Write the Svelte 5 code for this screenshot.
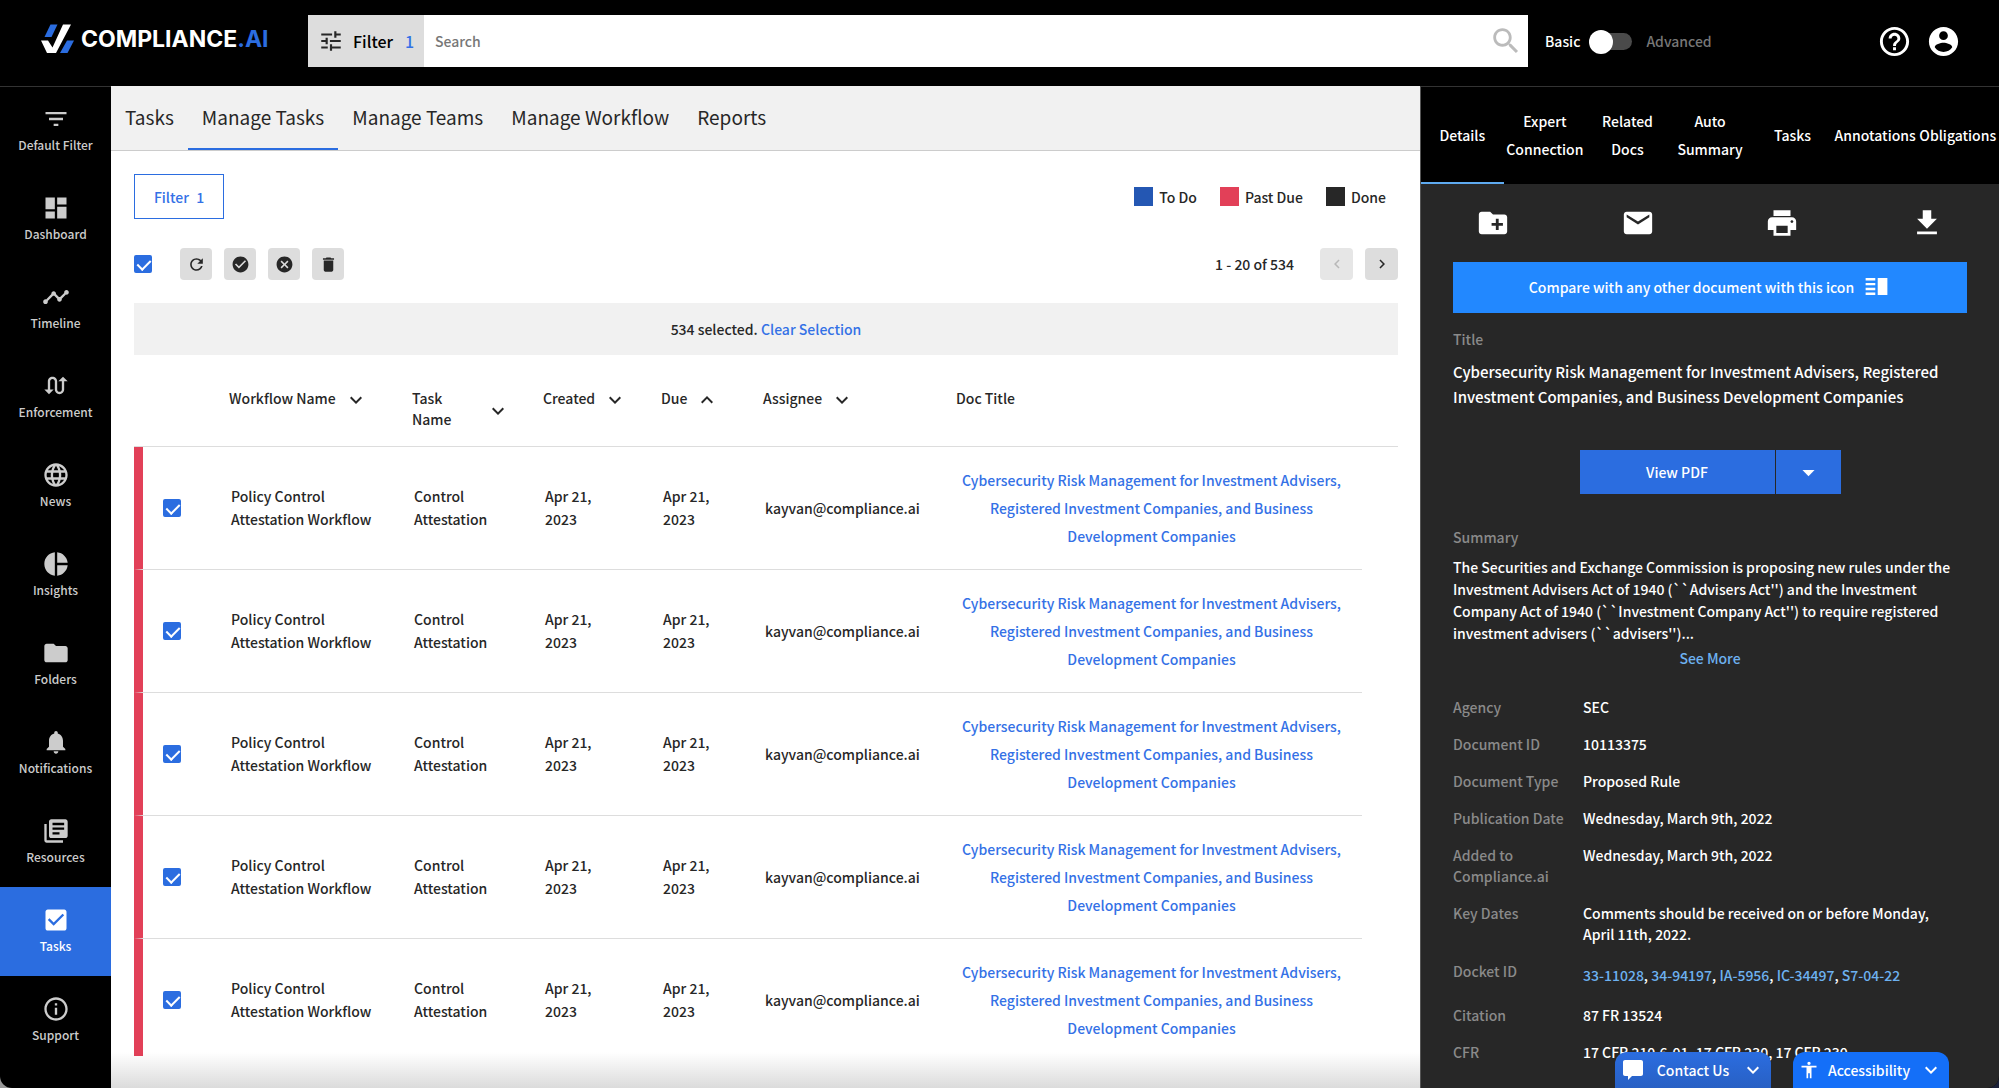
<script lang="ts">
	// Material-style 24x24 glyph paths, drawn by the icon snippet below.
	const icons = {
		filterList: 'M10 18h4v-2h-4v2zM3 6v2h18V6H3zm3 7h12v-2H6v2z',
		dashboard: 'M3 13h8V3H3v10zm0 8h8v-6H3v6zm10 0h8V11h-8v10zm0-18v6h8V3h-8z',
		timeline:
			'M23 8c0 1.1-.9 2-2 2-.18 0-.35-.02-.51-.07l-3.56 3.55c.05.16.07.34.07.52 0 1.1-.9 2-2 2s-2-.9-2-2c0-.18.02-.36.07-.52l-2.55-2.55c-.16.05-.34.07-.52.07s-.36-.02-.52-.07l-4.55 4.56c.05.16.07.33.07.51 0 1.1-.9 2-2 2s-2-.9-2-2 .9-2 2-2c.18 0 .35.02.51.07l4.56-4.55C8.02 9.36 8 9.18 8 9c0-1.1.9-2 2-2s2 .9 2 2c0 .18-.02.36-.07.52l2.55 2.55c.16-.05.34-.07.52-.07s.36.02.52.07l3.55-3.56C19.02 8.35 19 8.18 19 8c0-1.1.9-2 2-2s2 .9 2 2z',
		swap: 'M18 4l-4 4h3v7c0 1.1-.9 2-2 2s-2-.9-2-2V8c0-2.21-1.79-4-4-4S5 5.79 5 8v7H2l4 4 4-4H7V8c0-1.1.9-2 2-2s2 .9 2 2v7c0 2.21 1.79 4 4 4s4-1.79 4-4V8h3l-4-4z',
		globe:
			'M11.99 2C6.47 2 2 6.48 2 12s4.47 10 9.99 10C17.52 22 22 17.52 22 12S17.52 2 11.99 2zm6.93 6h-2.95c-.32-1.25-.78-2.45-1.38-3.56 1.84.63 3.37 1.91 4.33 3.56zM12 4.04c.83 1.2 1.48 2.53 1.91 3.96h-3.82c.43-1.43 1.08-2.76 1.91-3.96zM4.26 14C4.1 13.36 4 12.69 4 12s.1-1.36.26-2h3.38c-.08.66-.14 1.32-.14 2 0 .68.06 1.34.14 2H4.26zm.82 2h2.95c.32 1.25.78 2.45 1.38 3.56-1.84-.63-3.37-1.9-4.33-3.56zm2.95-8H5.08c.96-1.66 2.49-2.93 4.33-3.56C8.81 5.55 8.35 6.75 8.03 8zM12 19.96c-.83-1.2-1.48-2.53-1.91-3.96h3.82c-.43 1.43-1.08 2.76-1.91 3.96zM14.34 14H9.66c-.09-.66-.16-1.32-.16-2 0-.68.07-1.35.16-2h4.68c.09.65.16 1.32.16 2 0 .68-.07 1.34-.16 2zm.25 5.56c.6-1.11 1.06-2.31 1.38-3.56h2.95c-.96 1.65-2.49 2.93-4.33 3.56zM16.36 14c.08-.66.14-1.32.14-2 0-.68-.06-1.34-.14-2h3.38c.16.64.26 1.31.26 2s-.1 1.36-.26 2h-3.38z',
		pie: 'M11 2v20c-5.07-.5-9-4.79-9-10s3.93-9.5 9-10zm2.03 0v8.99H22c-.47-4.74-4.24-8.52-8.97-8.99zm0 11.01V22c4.74-.47 8.5-4.25 8.97-8.99h-8.97z',
		folder: 'M10 4H4c-1.1 0-1.99.9-1.99 2L2 18c0 1.1.9 2 2 2h16c1.1 0 2-.9 2-2V8c0-1.1-.9-2-2-2h-8l-2-2z',
		bell: 'M12 22c1.1 0 2-.9 2-2h-4c0 1.1.89 2 2 2zm6-6v-5c0-3.07-1.64-5.64-4.5-6.32V4c0-.83-.67-1.5-1.5-1.5s-1.5.67-1.5 1.5v.68C7.63 5.36 6 7.92 6 11v5l-2 2v1h16v-1l-2-2z',
		books: 'M4 6H2v14c0 1.1.9 2 2 2h14v-2H4V6zm16-4H8c-1.1 0-2 .9-2 2v12c0 1.1.9 2 2 2h12c1.1 0 2-.9 2-2V4c0-1.1-.9-2-2-2zm-1 9H9V9h10v2zm-4 4H9v-2h6v2zm4-8H9V5h10v2z',
		checkBox:
			'M19 3H5c-1.11 0-2 .9-2 2v14c0 1.1.89 2 2 2h14c1.11 0 2-.9 2-2V5c0-1.1-.89-2-2-2zm-9 14l-5-5 1.41-1.41L10 14.17l7.59-7.59L19 8l-9 9z',
		info: 'M11 17h2v-6h-2v6zm1-15C6.48 2 2 6.48 2 12s4.48 10 10 10 10-4.48 10-10S17.52 2 12 2zm0 18c-4.41 0-8-3.59-8-8s3.59-8 8-8 8 3.59 8 8-3.59 8-8 8zM11 9h2V7h-2v2z',
		tune: 'M3 17v2h6v-2H3zM3 5v2h10V5H3zm10 16v-2h8v-2h-8v-2h-2v6h2zM7 9v2H3v2h4v2h2V9H7zm14 4v-2H11v2h10zm-6-4h2V7h4V5h-4V3h-2v6z',
		search:
			'M15.5 14h-.79l-.28-.27C15.41 12.59 16 11.11 16 9.5 16 5.91 13.09 3 9.5 3S3 5.91 3 9.5 5.91 16 9.5 16c1.61 0 3.09-.59 4.23-1.57l.27.28v.79l5 4.99L20.49 19l-4.99-5zm-6 0C7.01 14 5 11.99 5 9.5S7.01 5 9.5 5 14 7.01 14 9.5 11.99 14 9.5 14z',
		help: 'M11 18h2v-2h-2v2zm1-16C6.48 2 2 6.48 2 12s4.48 10 10 10 10-4.48 10-10S17.52 2 12 2zm0 18c-4.41 0-8-3.59-8-8s3.59-8 8-8 8 3.59 8 8-3.59 8-8 8zm0-14c-2.21 0-4 1.79-4 4h2c0-1.1.9-2 2-2s2 .9 2 2c0 2-3 1.75-3 5h2c0-2.25 3-2.5 3-5 0-2.21-1.79-4-4-4z',
		account:
			'M12 2C6.48 2 2 6.48 2 12s4.48 10 10 10 10-4.48 10-10S17.52 2 12 2zm0 3c1.66 0 3 1.34 3 3s-1.34 3-3 3-3-1.34-3-3 1.34-3 3-3zm0 14.2c-2.5 0-4.71-1.28-6-3.22.03-1.99 4-3.08 6-3.08 1.99 0 5.97 1.09 6 3.08-1.29 1.94-3.5 3.22-6 3.22z',
		refresh:
			'M17.65 6.35C16.2 4.9 14.21 4 12 4c-4.42 0-7.99 3.58-7.99 8s3.57 8 7.99 8c3.73 0 6.84-2.55 7.73-6h-2.08c-.82 2.33-3.04 4-5.65 4-3.31 0-6-2.69-6-6s2.69-6 6-6c1.66 0 3.14.69 4.22 1.78L13 11h7V4l-2.35 2.35z',
		checkCircle:
			'M12 2C6.48 2 2 6.48 2 12s4.48 10 10 10 10-4.48 10-10S17.52 2 12 2zm-2 15l-5-5 1.41-1.41L10 14.17l7.59-7.59L19 8l-9 9z',
		cancel:
			'M12 2C6.47 2 2 6.47 2 12s4.47 10 10 10 10-4.47 10-10S17.53 2 12 2zm5 13.59L15.59 17 12 13.41 8.41 17 7 15.59 10.59 12 7 8.41 8.41 7 12 10.59 15.59 7 17 8.41 13.41 12 17 15.59z',
		trash: 'M6 19c0 1.1.9 2 2 2h8c1.1 0 2-.9 2-2V7H6v12zM19 4h-3.5l-1-1h-5l-1 1H5v2h14V4z',
		left: 'M15.41 7.41L14 6l-6 6 6 6 1.41-1.41L10.83 12z',
		right: 'M10 6L8.59 7.41 13.17 12l-4.58 4.59L10 18l6-6z',
		down: 'M16.59 8.59L12 13.17 7.41 8.59 6 10l6 6 6-6z',
		up: 'M12 8l-6 6 1.41 1.41L12 10.83l4.59 4.58L18 14z',
		caret: 'M7 10l5 5 5-5z',
		newFolder:
			'M20 6h-8l-2-2H4c-1.11 0-1.99.89-1.99 2L2 18c0 1.11.89 2 2 2h16c1.11 0 2-.89 2-2V8c0-1.11-.89-2-2-2zm-1 8h-3v3h-2v-3h-3v-2h3V9h2v3h3v2z',
		mail: 'M20 4H4c-1.1 0-1.99.9-1.99 2L2 18c0 1.1.9 2 2 2h16c1.1 0 2-.9 2-2V6c0-1.1-.9-2-2-2zm0 4l-8 5-8-5V6l8 5 8-5v2z',
		print: 'M19 8H5c-1.66 0-3 1.34-3 3v6h4v4h12v-4h4v-6c0-1.66-1.34-3-3-3zm-3 11H8v-5h8v5zm3-7c-.55 0-1-.45-1-1s.45-1 1-1 1 .45 1 1-.45 1-1 1zm-1-9H6v4h12V3z',
		download: 'M19 9h-4V3H9v6H5l7 7 7-7zM5 18v2h14v-2H5z',
		split: 'M3 15h8v-2H3v2zm0 4h8v-2H3v2zm0-8h8V9H3v2zm0-6v2h8V5H3zm10 0h8v14h-8V5z',
		chat: 'M4 2h16c1.1 0 2 .9 2 2v12c0 1.1-.9 2-2 2h-9l-4 4v-4H4c-1.1 0-2-.9-2-2V4c0-1.1.9-2 2-2z',
		person: 'M12 2a2 2 0 1 1 0 4 2 2 0 0 1 0-4zm9 7h-6v13h-2v-6h-2v6H9V9H3V7h18v2z'
	};
	type IconName = keyof typeof icons;

	const nav: { label: string; icon: IconName }[] = [
		{ label: 'Default Filter', icon: 'filterList' },
		{ label: 'Dashboard', icon: 'dashboard' },
		{ label: 'Timeline', icon: 'timeline' },
		{ label: 'Enforcement', icon: 'swap' },
		{ label: 'News', icon: 'globe' },
		{ label: 'Insights', icon: 'pie' },
		{ label: 'Folders', icon: 'folder' },
		{ label: 'Notifications', icon: 'bell' },
		{ label: 'Resources', icon: 'books' },
		{ label: 'Tasks', icon: 'checkBox' },
		{ label: 'Support', icon: 'info' }
	];
	let activeNav = $state('Tasks');

	const tabs = ['Tasks', 'Manage Tasks', 'Manage Teams', 'Manage Workflow', 'Reports'];
	let activeTab = $state('Manage Tasks');

	const legend = [
		{ label: 'To Do', tone: 'todo' },
		{ label: 'Past Due', tone: 'past' },
		{ label: 'Done', tone: 'done' }
	];

	const bulkActions: { label: string; icon: IconName }[] = [
		{ label: 'Refresh', icon: 'refresh' },
		{ label: 'Complete', icon: 'checkCircle' },
		{ label: 'Dismiss', icon: 'cancel' },
		{ label: 'Delete', icon: 'trash' }
	];

	const columns: { label: string; sort: IconName | null }[] = [
		{ label: 'Workflow Name', sort: 'down' },
		{ label: 'Task Name', sort: 'down' },
		{ label: 'Created', sort: 'down' },
		{ label: 'Due', sort: 'up' },
		{ label: 'Assignee', sort: 'down' },
		{ label: 'Doc Title', sort: null }
	];

	const title =
		'Cybersecurity Risk Management for Investment Advisers, Registered Investment Companies, and Business Development Companies';

	let rows = $state(
		Array.from({ length: 5 }, (_, id) => ({
			id,
			checked: true,
			workflow: 'Policy Control Attestation Workflow',
			task: 'Control Attestation',
			created: 'Apr 21, 2023',
			due: 'Apr 21, 2023',
			assignee: 'kayvan@compliance.ai'
		}))
	);
	let allChecked = $state(true);
	let advanced = $state(false);
	let query = $state('');

	const docTabs = ['Details', 'Expert Connection', 'Related Docs', 'Auto Summary', 'Tasks', 'Annotations', 'Obligations'];
	let activeDocTab = $state('Details');

	const docActions: { label: string; icon: IconName }[] = [
		{ label: 'Add to folder', icon: 'newFolder' },
		{ label: 'Email', icon: 'mail' },
		{ label: 'Print', icon: 'print' },
		{ label: 'Download', icon: 'download' }
	];

	const dockets = ['33-11028', '34-94197', 'IA-5956', 'IC-34497', 'S7-04-22'];
	const facts = [
		['Agency', 'SEC'],
		['Document ID', '10113375'],
		['Document Type', 'Proposed Rule'],
		['Publication Date', 'Wednesday, March 9th, 2022'],
		['Added to Compliance.ai', 'Wednesday, March 9th, 2022'],
		['Key Dates', 'Comments should be received on or before Monday, April 11th, 2022.'],
		['Docket ID', ''],
		['Citation', '87 FR 13524'],
		['CFR', '17 CFR 210.6-01, 17 CFR 230, 17 CFR 230']
	];

	function toggleAll() {
		for (const row of rows) row.checked = allChecked;
	}
</script>

{#snippet icon(name: IconName, size: number)}
	<svg width={size} height={size} viewBox="0 0 24 24" fill="currentColor" aria-hidden="true">
		<path d={icons[name]} />
	</svg>
{/snippet}

<div class="app">
	<header class="topbar">
		<a class="logo" href="#home">
			<svg width="33" height="30" viewBox="0 0 33 30" aria-hidden="true">
				<path fill="#2b6de0" d="M9.5 .5h7L10.5 13H3.5z" />
				<path fill="#2b6de0" d="M26 16.5h7L26.500 29h-7.500z" />
				<path fill="#fff" d="M22 .5h8L15 29H6L0 16.500h7l4.500 7z" />
			</svg>
			<span>COMPLIANCE<b>.AI</b></span>
		</a>
		<div class="searchbar">
			<button class="search-filter">
				{@render icon('tune', 26)}
				<span>Filter</span>
				<span class="count">1</span>
			</button>
			<input type="search" placeholder="Search" aria-label="Search" bind:value={query} />
			<button class="search-go" aria-label="Run search">{@render icon('search', 34)}</button>
		</div>
		<label class="mode">
			<span>Basic</span>
			<input type="checkbox" role="switch" bind:checked={advanced} />
			<span class="muted">Advanced</span>
		</label>
		<div class="account">
			<button aria-label="Help">{@render icon('help', 35)}</button>
			<button aria-label="Account">{@render icon('account', 35)}</button>
		</div>
	</header>

	<div class="body">
		<nav class="sidebar">
			{#each nav as item (item.label)}
				<a
					href="#{item.label}"
					class:active={item.label === activeNav}
					onclick={() => (activeNav = item.label)}
				>
					{@render icon(item.icon, 28)}
					<span>{item.label}</span>
				</a>
			{/each}
		</nav>

		<main class="main">
			<div class="tabs" role="tablist">
				{#each tabs as tab (tab)}
					<button role="tab" aria-selected={tab === activeTab} onclick={() => (activeTab = tab)}>{tab}</button>
				{/each}
			</div>

			<div class="content">
				<div class="line">
					<button class="filter">Filter <span>1</span></button>
					<ul class="legend">
						{#each legend as item (item.tone)}
							<li class={item.tone}>{item.label}</li>
						{/each}
					</ul>
				</div>

				<div class="line toolbar">
					<input
						type="checkbox"
						class="check"
						aria-label="Select all tasks"
						bind:checked={allChecked}
						onchange={toggleAll}
					/>
					<div class="bulk">
						{#each bulkActions as action (action.icon)}
							<button class="tool" aria-label={action.label}>{@render icon(action.icon, 19)}</button>
						{/each}
					</div>
					<div class="pager">
						<span>1 - 20 of 534</span>
						<button class="tool" aria-label="Previous page" disabled>{@render icon('left', 18)}</button>
						<button class="tool" aria-label="Next page">{@render icon('right', 18)}</button>
					</div>
				</div>

				<div class="selection">534 selected. <a href="#clear">Clear Selection</a></div>

				<div class="table-wrap">
					<table>
						<colgroup>
							<col class="c-check" />
							<col class="c-workflow" />
							<col class="c-task" />
							<col class="c-created" />
							<col class="c-due" />
							<col class="c-assignee" />
							<col />
							<col class="c-end" />
						</colgroup>
						<thead>
							<tr>
								<th></th>
								{#each columns as col (col.label)}
									<th>
										<div class="head" class:narrow={col.label === 'Task Name'}>
											<span>{col.label}</span>
											{#if col.sort}
												<button aria-label="Sort by {col.label}">{@render icon(col.sort, 24)}</button>
											{/if}
										</div>
									</th>
								{/each}
								<th></th>
							</tr>
						</thead>
						<tbody>
							{#each rows as row (row.id)}
								<tr>
									<td class="status">
										<input
											type="checkbox"
											class="check"
											aria-label="Select task {row.id + 1}"
											bind:checked={row.checked}
										/>
									</td>
									<td class="wide">{row.workflow}</td>
									<td class="two">{row.task}</td>
									<td class="date">{row.created}</td>
									<td class="date">{row.due}</td>
									<td>{row.assignee}</td>
									<td class="doc"><a href="#doc">{title}</a></td>
									<td class="end"></td>
								</tr>
							{/each}
						</tbody>
					</table>
				</div>
			</div>
			<div class="fade"></div>
		</main>

		<aside class="panel">
			<div class="doc-tabs" role="tablist">
				{#each docTabs as tab (tab)}
					<button role="tab" aria-selected={tab === activeDocTab} onclick={() => (activeDocTab = tab)}>{tab}</button>
				{/each}
			</div>
			<div class="doc-actions">
				{#each docActions as action (action.icon)}
					<button aria-label={action.label}>{@render icon(action.icon, 34)}</button>
				{/each}
			</div>
			<div class="details">
				<button class="compare">
					<span>Compare with any other document with this icon</span>
					{@render icon('split', 29)}
				</button>
				<h2>Title</h2>
				<p class="title">{title}</p>
				<div class="pdf">
					<button class="view">View PDF</button>
					<button class="more" aria-label="More PDF options">{@render icon('caret', 29)}</button>
				</div>
				<h2>Summary</h2>
				<p class="summary">
					The Securities and Exchange Commission is proposing new rules under the Investment Advisers Act of
					1940 (``Advisers Act'') and the Investment Company Act of 1940 (``Investment Company Act'') to
					require registered investment advisers (``advisers'')...
				</p>
				<a class="see-more" href="#summary">See More</a>
				<dl>
					{#each facts as [name, value] (name)}
						<dt>{name}</dt>
						{#if name === 'Docket ID'}
							<dd class="dockets">
								{#each dockets as docket, i (docket)}{i ? ', ' : ''}<a href="#{docket}">{docket}</a>{/each}
							</dd>
						{:else}
							<dd>{value}</dd>
						{/if}
					{/each}
				</dl>
			</div>
		</aside>
	</div>

	<div class="widgets">
		<button class="contact">
			{@render icon('chat', 24)}
			<span>Contact Us</span>
			{@render icon('down', 24)}
		</button>
		<button class="access">
			{@render icon('person', 20)}
			<span>Accessibility</span>
			{@render icon('down', 24)}
		</button>
	</div>
</div>

<style>
	:global(body) {
		background: linear-gradient(90deg, #999, #1b2038);
	}

	.app {
		--blue: #2b6de0;
		--link: #3471e6;
		--ink: #272727;
		position: relative;
		display: flex;
		flex-direction: column;
		height: 100vh;
		overflow: hidden;
		border-radius: 0 0 12px 12px;
		background: #000;
		color: var(--ink);
		font-family: 'Noto Sans CJK SC', 'Noto Sans', sans-serif;
		font-size: 14px;
		font-weight: 500;
		line-height: 24px;
	}
	.app * {
		box-sizing: border-box;
	}
	button,
	input {
		margin: 0;
		padding: 0;
		border: 0;
		background: none;
		color: inherit;
		font: inherit;
	}
	button {
		cursor: pointer;
	}
	svg {
		display: block;
		flex: none;
	}
	a {
		color: var(--link);
		text-decoration: none;
	}

	/* Top bar */
	.topbar {
		display: flex;
		flex: none;
		align-items: center;
		height: 86px;
		padding: 0 38px 4px 41px;
		color: #fff;
	}
	.logo {
		display: flex;
		flex: none;
		align-items: center;
		gap: 7px;
		width: 267px;
		padding-bottom: 4px;
		color: #fff;
		font: 700 23px/30px Inter, sans-serif;
	}
	.logo b {
		color: var(--blue);
		font-weight: 700;
	}
	.searchbar {
		display: flex;
		flex: 1;
		max-width: 1220px;
		height: 52px;
		background: #fff;
		color: #000;
	}
	.search-filter {
		display: flex;
		align-items: center;
		gap: 9px;
		width: 116px;
		padding-left: 10px;
		background: #ddd;
		font-size: 16px;
	}
	.search-filter svg {
		color: var(--ink);
	}
	.count {
		padding-left: 3px;
		color: var(--link);
	}
	.searchbar input {
		flex: 1;
		padding: 0 11px;
		outline: 0;
	}
	.searchbar input::placeholder {
		color: #777;
	}
	.search-go {
		padding: 0 5px;
		color: #bbb;
	}
	.mode {
		display: flex;
		align-items: center;
		gap: 14px;
		width: 349px;
		padding-left: 17px;
	}
	.mode input {
		position: relative;
		width: 38px;
		height: 17px;
		border-radius: 9px;
		background: #4a4a4a;
		appearance: none;
	}
	.mode input::before {
		content: '';
		position: absolute;
		top: -3px;
		left: -5px;
		width: 24px;
		height: 24px;
		border-radius: 50%;
		background: #fff;
	}
	.mode input:checked::before {
		left: 19px;
	}
	.muted {
		color: #777;
	}
	.account {
		display: flex;
		gap: 14px;
		margin-right: -4px;
	}

	.body {
		display: flex;
		flex: 1;
		min-height: 0;
	}

	/* Left navigation */
	.sidebar {
		flex: none;
		width: 111px;
		box-shadow: inset 0 1px #333;
	}
	.sidebar a {
		display: flex;
		flex-direction: column;
		align-items: center;
		height: 89px;
		padding-top: 19px;
		color: #ccc;
		font-size: 12px;
	}
	.sidebar a.active {
		background: var(--blue);
		color: #fff;
	}

	/* Main column */
	.main {
		position: relative;
		display: flex;
		flex: 1;
		flex-direction: column;
		min-width: 0;
		background: #fff;
	}
	.tabs {
		display: flex;
		flex: none;
		height: 65px;
		border-bottom: 1px solid #ccc;
		background: #f1f1f1;
	}
	.tabs button {
		padding: 0 14px;
		border-bottom: 2px solid transparent;
		font-size: 19px;
		font-weight: 400;
	}
	.tabs button[aria-selected='true'] {
		border-color: var(--blue);
	}
	.content {
		display: flex;
		flex: 1;
		flex-direction: column;
		min-height: 0;
		padding: 23px 22px 32px 23px;
	}
	.line {
		display: flex;
		flex: none;
		align-items: center;
		justify-content: space-between;
	}
	.filter {
		width: 90px;
		height: 45px;
		border: 1px solid var(--blue);
		color: var(--link);
	}
	.filter span {
		padding-left: 4px;
	}
	.legend {
		display: flex;
		gap: 23px;
		margin: 0;
		padding: 0 12px 0 0;
		list-style: none;
	}
	.legend li {
		display: flex;
		align-items: center;
		gap: 6px;
	}
	.legend li::before {
		content: '';
		width: 19px;
		height: 19px;
		background: #2457b3;
	}
	.legend .past::before {
		background: #e24058;
	}
	.legend .done::before {
		background: var(--ink);
	}
	.toolbar {
		margin: 29px 0 23px;
	}
	.bulk {
		display: flex;
		flex: 1;
		gap: 12px;
		padding-left: 28px;
	}
	.tool {
		display: grid;
		place-items: center;
		width: 32px;
		height: 32px;
		border-radius: 4px;
		background: #ddd;
	}
	.tool:disabled {
		background: #e6e6e6;
		color: #b8b8b8;
	}
	.pager {
		display: flex;
		align-items: center;
		gap: 12px;
	}
	.pager .tool {
		width: 33px;
	}
	.pager span {
		padding-right: 14px;
	}
	.check {
		position: relative;
		display: block;
		width: 18px;
		height: 18px;
		border: 2px solid #777;
		border-radius: 2px;
		appearance: none;
	}
	.check:checked {
		border-color: var(--blue);
		background: var(--blue);
	}
	.check:checked::after {
		content: '';
		position: absolute;
		top: 0;
		left: 4px;
		width: 6px;
		height: 11px;
		border: solid #fff;
		border-width: 0 2px 2px 0;
		transform: rotate(45deg);
	}
	.selection {
		flex: none;
		padding: 14px;
		background: #f1f1f1;
		text-align: center;
	}

	/* Task table */
	.table-wrap {
		flex: 1;
		min-height: 0;
		overflow: hidden;
	}
	table {
		width: 100%;
		border-spacing: 0;
		table-layout: fixed;
		line-height: 23px;
	}
	.c-check {
		width: 95px;
	}
	.c-workflow {
		width: 183px;
	}
	.c-task {
		width: 131px;
	}
	.c-created {
		width: 118px;
	}
	.c-due {
		width: 102px;
	}
	.c-assignee {
		width: 193px;
	}
	.c-end {
		width: 36px;
	}
	th {
		height: 92px;
		padding: 33px 0 0;
		border-bottom: 1px solid #ddd;
		font-weight: 500;
		line-height: 21px;
		text-align: left;
		vertical-align: top;
	}
	.head {
		display: flex;
		align-items: center;
		gap: 8px;
	}
	.head.narrow {
		justify-content: space-between;
		width: 98px;
	}
	.head.narrow span {
		width: 50px;
	}
	.head button {
		height: 21px;
	}
	td {
		height: 123px;
		padding: 0 0 0 2px;
		border-bottom: 1px solid #ddd;
	}
	td.end {
		border: 0;
	}
	.status {
		padding-left: 20px;
		border-left: 9px solid #e24058;
	}
	.wide {
		padding-right: 30px;
	}
	.two {
		padding-right: 40px;
	}
	.date {
		padding-right: 48px;
	}
	.doc {
		padding-right: 17px;
		line-height: 28px;
		text-align: center;
	}
	.fade {
		position: absolute;
		right: 0;
		bottom: 0;
		left: 0;
		height: 36px;
		background: linear-gradient(transparent, rgba(0, 0, 0, 0.14));
	}

	/* Document panel */
	.panel {
		flex: none;
		width: 579px;
		overflow: hidden;
		border-top: 1px solid #333;
		border-left: 1px solid #555;
		background: #272727;
		color: #fff;
	}
	.doc-tabs {
		display: flex;
		height: 97px;
		background: #000;
	}
	.doc-tabs button {
		flex: 1 1 0;
		min-width: 0;
		border-bottom: 2px solid transparent;
		line-height: 28px;
	}
	.doc-tabs button[aria-selected='true'] {
		border-color: #5eaaf0;
	}
	.doc-actions {
		display: flex;
	}
	.doc-actions button {
		display: grid;
		flex: 1;
		place-items: center;
		height: 78px;
	}
	.details {
		padding: 0 32px;
	}
	.compare {
		display: flex;
		align-items: center;
		justify-content: center;
		gap: 8px;
		width: 100%;
		height: 51px;
		padding-bottom: 2px;
		background: #2288ff;
	}
	h2 {
		margin: 14px 0 0;
		color: #8a8a8a;
		font-size: 14px;
		font-weight: 500;
		line-height: 24px;
	}
	p {
		margin: 0;
	}
	.title {
		padding-top: 8px;
		font-size: 15px;
		line-height: 25px;
	}
	.pdf {
		display: flex;
		justify-content: center;
		gap: 1px;
		margin: 41px 0 31px;
	}
	.pdf button {
		height: 44px;
		background: var(--blue);
	}
	.view {
		width: 195px;
	}
	.more {
		display: grid;
		place-items: center;
		width: 65px;
	}
	.summary {
		padding-top: 7px;
		line-height: 22px;
	}
	.see-more {
		display: block;
		padding-top: 2px;
		text-align: center;
	}
	.panel a {
		color: #6db1f0;
	}
	dl {
		display: grid;
		grid-template-columns: 114px 1fr;
		gap: 16px;
		margin: 27px 0 0;
		line-height: 21px;
	}
	dt {
		color: #8a8a8a;
	}
	dd {
		margin: 0;
		padding-right: 24px;
	}
	.dockets {
		padding: 4px 0 3px;
	}

	/* Help widgets pinned to the bottom edge */
	.widgets {
		position: absolute;
		right: 50px;
		bottom: 0;
		display: flex;
		gap: 22px;
	}
	.widgets button {
		display: flex;
		align-items: center;
		justify-content: space-between;
		width: 156px;
		height: 36px;
		padding: 0 6px;
		border-radius: 12px 12px 0 0;
		background: #146ff8;
		color: #fff;
	}
	.widgets .contact {
		background: linear-gradient(var(--blue), #2860c4);
	}
</style>
